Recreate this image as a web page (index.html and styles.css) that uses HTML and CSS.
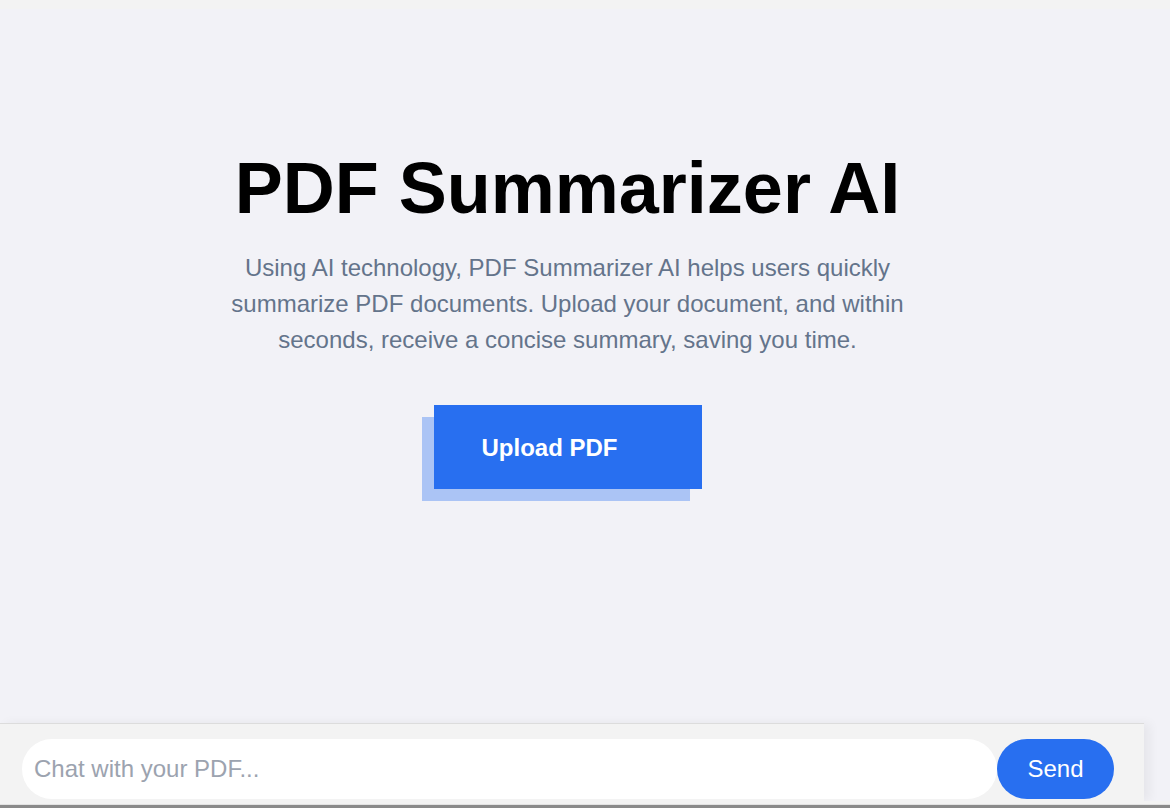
FILE: index.html
```html
<!DOCTYPE html>
<html lang="en">
<head>
<meta charset="utf-8">
<title>PDF Summarizer AI</title>
<link rel="stylesheet" href="styles.css">
</head>
<body>
<div class="page">
  <div class="topstrip"></div>
  <main class="hero">
    <h1 class="title">PDF Summarizer AI</h1>
    <p class="lead">Using AI technology, PDF Summarizer AI helps users quickly summarize PDF documents. Upload your document, and within seconds, receive a concise summary, saving you time.</p>
    <button class="upload" type="button">Upload PDF</button>
  </main>
  <div class="chatbar">
    <input class="chat-input" type="text" placeholder="Chat with your PDF...">
    <button class="send" type="button">Send</button>
  </div>
  <div class="bottom-fill"></div>
  <div class="bottom-strip"></div>
</div>
</body>
</html>
```

FILE: styles.css
```css
* { box-sizing: border-box; }
html, body {
  margin: 0;
  padding: 0;
  height: 100%;
  background: #f2f2f7;
  font-family: "Liberation Sans", Arial, sans-serif;
  overflow: hidden;
}
.page {
  height: 808px;
  display: flex;
  flex-direction: column;
}
.topstrip {
  height: 9px;
  background: #f3f3f3;
  flex: none;
}
.hero {
  flex: 1;
  width: 1135px;
  padding-top: 143px;
  text-align: center;
}
.title {
  margin: 0 0 26px;
  font-size: 72px;
  line-height: 72px;
  font-weight: 700;
  color: #000;
}
.lead {
  margin: 0 auto;
  max-width: 680px;
  font-size: 24px;
  line-height: 36px;
  color: #64748b;
}
.upload {
  margin-top: 47px;
  width: 268px;
  height: 84px;
  padding: 2px 0 0 48px;
  text-align: left;
  border: none;
  background: #286ff0;
  color: #fff;
  font-family: "Liberation Sans", Arial, sans-serif;
  font-size: 24px;
  font-weight: 700;
  box-shadow: -12px 12px 0 #abc4f5;
  cursor: pointer;
}
.chatbar {
  flex: none;
  width: 1144px;
  height: 78px;
  border-top: 1px solid #dcdcdc;
  background: #f3f3f3;
  padding: 15px 0 2px 22px;
  display: flex;
  align-items: center;
  box-shadow: 6px 0 10px rgba(0, 0, 0, 0.05);
}
.chat-input {
  width: 975px;
  height: 60px;
  border: none;
  border-radius: 30px;
  background: #fff;
  padding: 0 12px;
  font-family: "Liberation Sans", Arial, sans-serif;
  font-size: 24px;
  color: #111;
  outline: none;
}
.chat-input::placeholder {
  color: #9ca3af;
}
.send {
  width: 117px;
  height: 60px;
  border: none;
  border-radius: 30px;
  background: #286ff0;
  color: #fff;
  font-family: "Liberation Sans", Arial, sans-serif;
  font-size: 24px;
  cursor: pointer;
}
.bottom-fill {
  flex: none;
  height: 4px;
  background: #f3f3f3;
  border-bottom: 1px solid #e2e2e2;
}
.bottom-strip {
  flex: none;
  height: 3px;
  background: #8a8a8a;
}
```
